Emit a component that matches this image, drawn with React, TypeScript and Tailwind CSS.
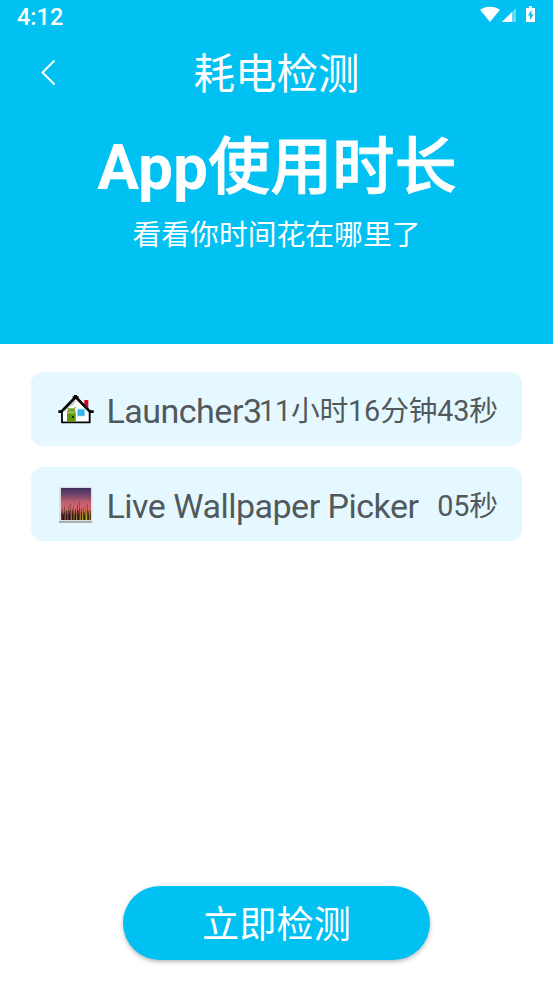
import React from "react";

// x, height, colour of every blade of grass
const grass: [number, number, string][] = [
  [33, 26, "#6b2f2c"], [36, 34, "#43201d"], [39, 20, "#1d120c"],
  [42, 40, "#5a2a28"], [45, 24, "#8a5a2c"], [48, 30, "#26150f"],
  [51, 22, "#6f4a22"], [54, 42, "#56302b"], [57, 28, "#1d120c"],
  [60, 50, "#6a3430"], [63, 22, "#92702a"], [66, 32, "#2f1a12"],
  [69, 44, "#713c33"], [72, 18, "#5d4a18"], [75, 34, "#2a1810"],
  [78, 24, "#9a6c34"], [81, 46, "#4f2a24"], [84, 28, "#1d140a"],
  [87, 56, "#6e3a35"], [90, 20, "#8b7a20"], [93, 36, "#3f2a16"],
  [96, 26, "#a48c24"], [99, 40, "#5c3c22"], [102, 22, "#2c2209"],
  [105, 44, "#84602c"], [108, 30, "#b09a2a"], [111, 50, "#5a3a2a"],
  [114, 26, "#3b2e0c"], [117, 38, "#93742a"], [120, 30, "#54401a"],
];

function LauncherIcon() {
  return (
    <svg viewBox="24 18 108 108" className="w-9 h-9 shrink-0 overflow-visible">
      {/* Chimney */}
      <path d="M103 45h12v24l-12-12z" fill="#d0021b" />
      {/* Walls */}
      <path d="M77 38 L119 78 V112 H37 V78z" fill="#fff" />
      <path d="M76 40 L42 74 v8 L60 64 h6 L76 52z" fill="#d2d2d2" />
      <path
        d="M36 80v32h83V80"
        fill="none"
        stroke="#050505"
        strokeWidth="5.5"
      />
      {/* Roof */}
      <path
        d="M25 80h9L77 36l43 44h11"
        fill="none"
        stroke="#050505"
        strokeWidth="8"
      />
      <path d="M72 30h9v4h5v6H68v-6h4z" fill="#050505" />
      {/* Door */}
      <path d="M51 66h4v4h18v-4h4v4l-3 3 3 6H51l3-6-3-3z" fill="#76a82b" />
      <path d="M51 79h26v31H51z" fill="#5d9803" />
      <path d="M51 80h26v6H51z" fill="#94b960" />
      <path d="M66 93h6v6h-6z" fill="#172800" />
      {/* Window */}
      <path d="M81 71h24v23H81z" fill="#9cdcf7" />
      <path d="M84 74h19v18H84z" fill="#35b5e9" />
    </svg>
  );
}

function WallpaperIcon() {
  return (
    <svg viewBox="24 18 108 108" className="w-9 h-9 shrink-0 overflow-visible">
      <defs>
        <linearGradient id="sky" x1="0" y1="0" x2="0" y2="1">
          <stop offset="0" stopColor="#3f315e" />
          <stop offset=".2" stopColor="#6d436b" />
          <stop offset=".45" stopColor="#c15e71" />
          <stop offset=".65" stopColor="#d9686b" />
          <stop offset=".85" stopColor="#a9503f" />
          <stop offset="1" stopColor="#3a2414" />
        </linearGradient>
      </defs>
      <path d="M27 20h100v109H27z" fill="#dcdfe2" />
      <path d="M27 123h99v6H27z" fill="#a9adb0" />
      <path d="M33 24h90v96H33z" fill="url(#sky)" />
      {grass.map(([x, h, color]) => (
        <g key={x} fill={color}>
          <rect x={x} y={120 - h} width="3" height={h} opacity=".55" />
          <rect x={x} y={120 - h * 0.62} width="3" height={h * 0.62} />
        </g>
      ))}
    </svg>
  );
}

const apps = [
  { name: "Launcher3", time: "11小时16分钟43秒", icon: <LauncherIcon /> },
  { name: "Live Wallpaper Picker", time: "05秒", icon: <WallpaperIcon /> },
];

export default function App() {
  return (
    <div className="w-full h-[984px] bg-white flex flex-col overflow-hidden font-[Roboto,'Noto_Sans_CJK_SC',sans-serif] whitespace-nowrap">
      <header className="h-[344px] shrink-0 bg-[#01c0f2] text-white flex flex-col">
        {/* Status bar */}
        <div className="h-8 pl-[17px] pr-[18px] flex justify-between">
          <span className="pt-[3px] text-[23.5px] leading-[29px] font-medium">
            4:12
          </span>
          <div className="flex items-start pt-[6px]">
            <svg width="20" height="16" viewBox="0 0 20 16" fill="#fff">
              <path d="M0 3.7C5.5-.4 14.5-.4 20 3.7L10 16z" />
            </svg>
            <svg
              width="14"
              height="14"
              viewBox="0 0 14 14"
              fill="#fff"
              className="ml-[2px] mt-[2px]"
            >
              <path d="M14 0v14H0z" opacity=".4" />
              <path d="M10 4v10H0z" />
            </svg>
            <svg
              width="9"
              height="16"
              viewBox="0 0 9 16"
              className="ml-[10px]"
            >
              <path d="M3 0h3v2h3v14H0V2h3z" fill="#fff" />
              <path d="M5.5 4 2 9.5h2V14l3.5-5.5h-2z" fill="#01c0f2" />
            </svg>
          </div>
        </div>

        {/* Title bar */}
        <div className="h-[84px] px-10 grid grid-cols-[1fr_auto_1fr] items-center">
          <svg
            width="16"
            height="26"
            viewBox="0 0 16 26"
            fill="none"
            stroke="#fff"
            strokeWidth="2"
            className="-mt-[5px]"
          >
            <path d="M14.5 1.5 2.5 13.5l12 12" />
          </svg>
          <h1 className="pt-[2px] text-[41.5px] leading-[60px]">耗电检测</h1>
        </div>

        <div className="flex flex-col items-center">
          <h2 className="mt-[7px] pl-px text-[62.2px] leading-[90px] font-bold">
            App
            <span className="font-medium [-webkit-text-stroke:0.8px_#fff]">
              使用时长
            </span>
          </h2>
          <p className="mt-px text-[28.8px] leading-[42px]">
            看看你时间花在哪里了
          </p>
        </div>
      </header>

      {/* Usage list */}
      <main className="flex-1 px-[31px] pt-7 flex flex-col gap-[21px]">
        {apps.map((app) => (
          <div
            key={app.name}
            className="h-[74px] pl-[27px] pr-6 rounded-xl bg-[#e5f8ff] text-[#52595c] flex items-center"
          >
            {app.icon}
            <span className="ml-[12.5px] flex-1 min-w-0 text-[34px] leading-[50px] tracking-[-0.5px] pt-[3px]">
              {app.name}
            </span>
            <span className="pt-[3px] text-[28.8px] leading-[42px] tracking-[-0.18px]">
              {app.time}
            </span>
          </div>
        ))}
      </main>

      <footer className="pb-[24.5px] flex justify-center">
        <button className="w-[307px] h-[74px] pt-1 rounded-full bg-[#01c0f2] text-white text-[37.2px] leading-[54px] shadow-[0_2px_4px_rgba(0,0,0,0.28)]">
          立即检测
        </button>
      </footer>
    </div>
  );
}
